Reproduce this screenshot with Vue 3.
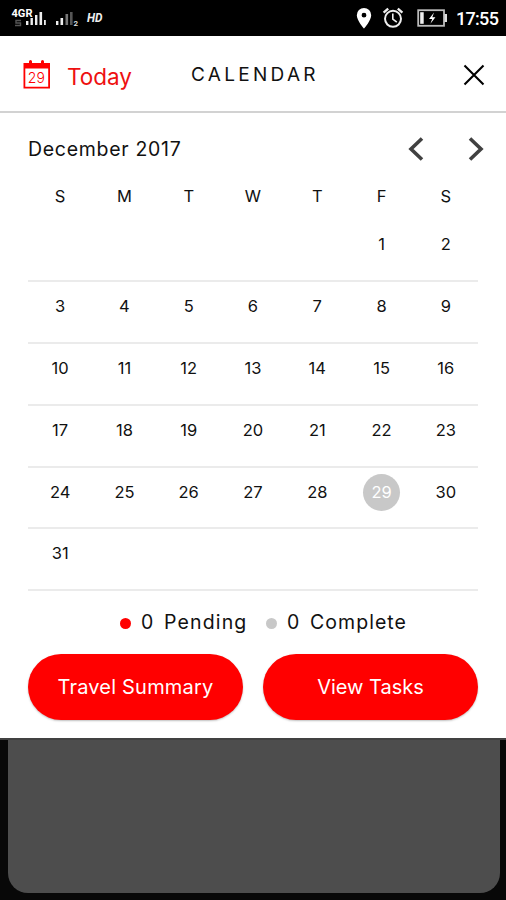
<script setup>
const weekdays = ['S', 'M', 'T', 'W', 'T', 'F', 'S']
const cells = Array.from({ length: 42 }, (_, i) => (i >= 5 && i < 36 ? i - 4 : null))
const weeks = Array.from({ length: 6 }, (_, w) => cells.slice(w * 7, w * 7 + 7))
const selected = 29
</script>

<template>
  <div class="screen">
    <div class="status">
      <svg class="signals" width="112" height="36" viewBox="0 0 112 36">
        <text x="11.5" y="16.500" class="net" textLength="21" lengthAdjust="spacingAndGlyphs">4GR</text>
        <path d="M21 20.500h-5v2.500h4.500v2.500H15" fill="none" stroke="#555" stroke-width="1.400" />
        <g fill="#eee">
          <rect x="26" y="21" width="2.4" height="4" />
          <rect x="30.5" y="18" width="2.4" height="7" />
          <rect x="35" y="15" width="2.4" height="10" />
          <rect x="39.5" y="12" width="2.6" height="13" />
          <rect x="44" y="20" width="1.8" height="5" />
          <rect x="56" y="21" width="2.4" height="4" />
          <rect x="60.5" y="18" width="2.6" height="7" />
        </g>
        <rect x="65.5" y="14" width="2.6" height="11" fill="#777" />
        <rect x="70" y="12" width="2.6" height="13" fill="#555" />
        <text x="73.5" y="25.5" class="two">2</text>
        <text x="87" y="22" class="hd" textLength="15.5" lengthAdjust="spacingAndGlyphs">HD</text>
      </svg>
      <svg class="indicators" width="96" height="36" viewBox="354 0 96 36">
        <path fill="#fff" fill-rule="evenodd" d="M364 8a7.2 7.2 0 0 0-7.2 7.2C356.800 20.500 364 28.500 364 28.500s7.200-8 7.200-13.300A7.200 7.200 0 0 0 364 8Zm0 4.800a2.400 2.400 0 1 1 0 4.800 2.400 2.400 0 0 1 0-4.800Z" />
        <g fill="none" stroke="#eee" stroke-width="2">
          <circle cx="393" cy="18.800" r="8" />
          <path d="M392.800 13.500V19l4 3.200" stroke-width="1.600" />
          <path d="M383.600 12.600l4.600-4M402.400 12.600l-4.600-4" stroke-width="2.400" />
        </g>
        <rect x="418.200" y="10.200" width="25.800" height="15.600" fill="none" stroke="#bbb" stroke-width="1.800" />
        <rect x="420.200" y="12.200" width="3.500" height="11.600" fill="#eee" />
        <rect x="444.500" y="14" width="2.500" height="8" fill="#ddd" />
        <path fill="#fff" d="M434 12.500l-5 6.400h3.200l-1.800 4.800 5-6.500h-3.100Z" />
      </svg>
      <span class="time">17:55</span>
    </div>

    <section class="panel">
      <header class="head">
        <svg class="cal" width="28" height="30" viewBox="0 0 28 30">
          <path fill="#f00" d="M0.500 3H6V1.600a1.500 1.500 0 0 1 3 0V3h9V1.600a1.500 1.500 0 0 1 3 0V3h6V28.500H.5ZM2.300 8.500v18.200h22.900V8.500Z" fill-rule="evenodd" />
          <text x="4.800" y="22.500" textLength="17" lengthAdjust="spacingAndGlyphs">29</text>
        </svg>
        <span class="today">Today</span>
        <h1>CALENDAR</h1>
        <svg class="close" width="22" height="22" viewBox="0 0 22 22">
          <path d="M1.500 1.500l19 19M20.500 1.500l-19 19" stroke="#000" stroke-width="2.100" />
        </svg>
      </header>

      <div class="month">
        <span class="title">December 2017</span>
        <svg width="80" height="26" viewBox="0 0 80 26" fill="none" stroke="#414141" stroke-width="3.600">
          <path d="M17 2.500L6 13l11 10.500M65 2.500L76 13l-11 10.500" />
        </svg>
      </div>

      <div class="calendar">
        <div class="row names"><span v-for="(d, i) in weekdays" :key="i">{{ d }}</span></div>
        <div v-for="(week, w) in weeks" :key="w" class="row week">
          <span v-for="(day, i) in week" :key="i" :class="{ selected: day === selected }">{{ day }}</span>
        </div>
      </div>

      <div class="legend">
        <i class="dot"></i><span class="num">0</span><span class="pending">Pending</span>
        <i class="dot done"></i><span class="num">0</span><span class="complete">Complete</span>
      </div>

      <div class="actions">
        <button class="travel">Travel Summary</button>
        <button class="tasks">View Tasks</button>
      </div>
    </section>

    <div class="backdrop"><div class="card"></div></div>
  </div>
</template>

<style>
body { margin: 0; background: #080808; }
</style>

<style scoped>
.screen { width: 506px; height: 900px; overflow: hidden; display: flex; flex-direction: column; background: #080808; font-family: Inter, "Liberation Sans", sans-serif; color: #111; }
.status { height: 36px; flex: none; display: flex; align-items: center; background: #000; color: #fff; }
.signals { flex: none; }
.indicators { margin-left: 242px; flex: none; }
.time { margin-left: 6px; font: 500 18px/36px Roboto, sans-serif; letter-spacing: -0.7px; padding-top: 2px; }
.net { font: 700 11.500px Roboto, sans-serif; fill: #fff; }
.two { font: 700 8px Roboto, sans-serif; fill: #ddd; }
.hd { font: italic 700 12px Roboto, sans-serif; fill: #eee; }
.panel { height: 702px; flex: none; background: #fff; display: flex; flex-direction: column; box-sizing: border-box; }
.head { height: 77px; box-sizing: border-box; border-bottom: 2px solid #d2d2d2; display: flex; align-items: center; padding: 0 21px 0 23px; flex: none; }
.cal { flex: none; margin-top: 3px; }
.cal text { font: 300 14.500px Inter, sans-serif; fill: #f00; }
.today { width: 124px; margin-left: 16px; margin-top: 6px; color: #ee1010; font-size: 22.500px; line-height: 28px; letter-spacing: 0; }
h1 { margin: 2px 0 0; font-size: 19px; font-weight: 400; line-height: 24px; letter-spacing: 3.300px; white-space: nowrap; }
.close { margin-left: auto; margin-top: 2px; }
.month { height: 72px; flex: none; display: flex; align-items: center; justify-content: space-between; padding: 0 21px 0 28px; }
.title { font-size: 19.500px; letter-spacing: 0.700px; }
.calendar { width: 450px; margin-left: 28px; flex: none; }
.row { display: grid; grid-template-columns: repeat(7, 1fr); justify-items: center; }
.names { height: 35px; font-size: 16.500px; line-height: 23px; }
.week { height: 61.900px; box-sizing: border-box; border-bottom: 2px solid #ebebeb; padding-top: 6px; font-size: 16.500px; line-height: 37px; }
.week span { width: 37px; height: 37px; text-align: center; border-radius: 50%; }
.week .selected { background: #c8c8c8; color: #fff; }
.legend { height: 61px; margin-bottom: 2px; flex: none; display: flex; align-items: center; padding-left: 120px; font-size: 19.500px; }
.dot { width: 11px; height: 11px; border-radius: 50%; background: #f00; margin-top: 4px; }
.done { background: #c8c8c8; margin-left: 19px; }
.num { width: 23px; margin-left: 10px; }
.pending { width: 83px; letter-spacing: 1.150px; }
.complete { letter-spacing: 1.050px; }
.actions { display: flex; gap: 20px; padding-left: 28px; }
button { width: 215px; height: 66px; border: 0; border-radius: 33px; background: #f00; color: #fff; font: 400 20px/67px Inter, sans-serif; padding: 0; box-shadow: 0 1px 2px rgba(0,0,0,.25); }
.travel { letter-spacing: 0.200px; }
.backdrop { flex: 1; padding: 0 6px 7px 8px; display: flex; border-top: 2px solid #414141; }
.card { flex: 1; background: #4d4d4d; border-radius: 0 0 20px 20px; }
</style>
